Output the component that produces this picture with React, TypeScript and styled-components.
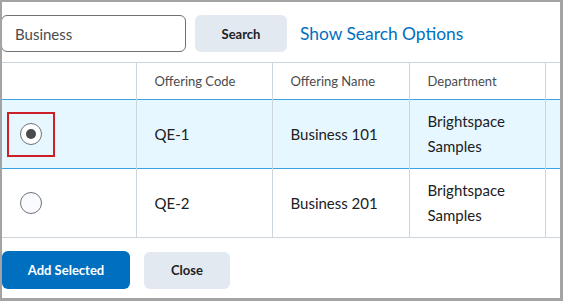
import styled, { createGlobalStyle } from 'styled-components';

const GlobalStyle = createGlobalStyle`
  html, body {
    margin: 0;
    padding: 0;
    background: #ffffff;
  }
  * {
    box-sizing: border-box;
  }
`;

type Offering = {
  code: string;
  name: string;
  department: string;
  selected: boolean;
};

const OFFERINGS: Offering[] = [
  { code: 'QE-1', name: 'Business 101', department: 'Brightspace Samples', selected: true },
  { code: 'QE-2', name: 'Business 201', department: 'Brightspace Samples', selected: false },
];

const App = () => {
  return (
    <>
      <GlobalStyle />
      <Frame>
        <SearchBar>
          <SearchInput defaultValue="Business" />
          <GrayButton $width={92}>Search</GrayButton>
          <OptionsLink>Show Search Options</OptionsLink>
        </SearchBar>
        <Table>
          <colgroup>
            <col style={{ width: 134 }} />
            <col style={{ width: 136 }} />
            <col style={{ width: 137 }} />
            <col style={{ width: 136 }} />
            <col />
          </colgroup>
          <thead>
            <tr>
              <HeadCell />
              <HeadCell>Offering Code</HeadCell>
              <HeadCell>Offering Name</HeadCell>
              <HeadCell>Department</HeadCell>
              <HeadCell />
            </tr>
          </thead>
          <tbody>
            {OFFERINGS.map((item) => (
              <Row key={item.code} $selected={item.selected}>
                <RadioCell>
                  <FocusBox $focused={item.selected}>
                    <Radio $checked={item.selected} />
                  </FocusBox>
                </RadioCell>
                <Cell>{item.code}</Cell>
                <Cell>{item.name}</Cell>
                <Cell>{item.department}</Cell>
                <Cell />
              </Row>
            ))}
          </tbody>
        </Table>
        <Footer>
          <PrimaryButton>Add Selected</PrimaryButton>
          <GrayButton $width={86}>Close</GrayButton>
        </Footer>
      </Frame>
    </>
  );
};

const Frame = styled.div`
  width: 563px;
  height: 301px;
  border-style: solid;
  border-color: #a3a3a3;
  border-width: 2px 3px 3px 2px;
  padding-top: 13px;
  font-family: Lato, 'Noto Sans', sans-serif;
  color: #202122;
  overflow: hidden;
`;

const SearchBar = styled.div`
  display: flex;
  align-items: center;
  gap: 9px;
  height: 37px;
`;

const SearchInput = styled.input`
  width: 185px;
  height: 37px;
  margin-left: -1px;
  padding: 0 13px;
  border: 1px solid #6e7376;
  border-radius: 6px;
  font-family: inherit;
  font-size: 15px;
  color: #494c4e;
  outline: none;
`;

const GrayButton = styled.button<{ $width: number }>`
  width: ${(p) => p.$width}px;
  height: 37px;
  border: none;
  border-radius: 6px;
  background: #e3e9f1;
  font-family: inherit;
  font-size: 13px;
  font-weight: 700;
  color: #202122;
  padding: 0;
`;

const OptionsLink = styled.a`
  margin-left: 4px;
  font-size: 17.4px;
  color: #006fbf;
  cursor: pointer;
`;

const Table = styled.table`
  width: 558px;
  margin-top: 10px;
  border-collapse: collapse;
  table-layout: fixed;
`;

const HeadCell = styled.th`
  height: 37px;
  padding: 0 18px;
  text-align: left;
  font-size: 13px;
  font-weight: 400;
  color: #494c4e;
  border-top: 1px solid #cdd5dc;
  border-right: 1px solid #cdd5dc;
  &:last-child {
    border-right: none;
  }
`;

const Row = styled.tr<{ $selected: boolean }>`
  background: ${(p) => (p.$selected ? '#e6f7ff' : '#ffffff')};
  border-top: 1px solid ${(p) => (p.$selected ? '#3aa3e3' : '#cdd5dc')};
  border-bottom: 1px solid ${(p) => (p.$selected ? '#3aa3e3' : '#cdd5dc')};
`;

const Cell = styled.td`
  height: 69px;
  padding: 0 18px;
  font-size: 15px;
  line-height: 25px;
  color: #202122;
  border-right: 1px solid #cdd5dc;
  &:last-child {
    border-right: none;
  }
`;

const RadioCell = styled(Cell)`
  padding: 0 0 0 5px;
`;

const FocusBox = styled.div<{ $focused: boolean }>`
  width: 48px;
  height: 45px;
  display: flex;
  align-items: center;
  justify-content: center;
  border: 2px solid ${(p) => (p.$focused ? '#cd2026' : 'transparent')};
`;

const Radio = styled.span<{ $checked: boolean }>`
  width: 22px;
  height: 22px;
  border-radius: 50%;
  border: 1px solid #6e7376;
  background: ${(p) => (p.$checked ? '#ffffff' : '#f9fbff')};
  display: flex;
  align-items: center;
  justify-content: center;
  &::after {
    content: '';
    display: ${(p) => (p.$checked ? 'block' : 'none')};
    width: 10px;
    height: 10px;
    border-radius: 50%;
    background: #494c4e;
  }
`;

const Footer = styled.div`
  display: flex;
  align-items: center;
  gap: 14px;
  margin-top: 13px;
`;

const PrimaryButton = styled.button`
  width: 128px;
  height: 38px;
  border: none;
  border-radius: 6px;
  background: #006fbf;
  color: #ffffff;
  font-family: inherit;
  font-size: 13px;
  font-weight: 700;
  padding: 0;
`;

export default App;
